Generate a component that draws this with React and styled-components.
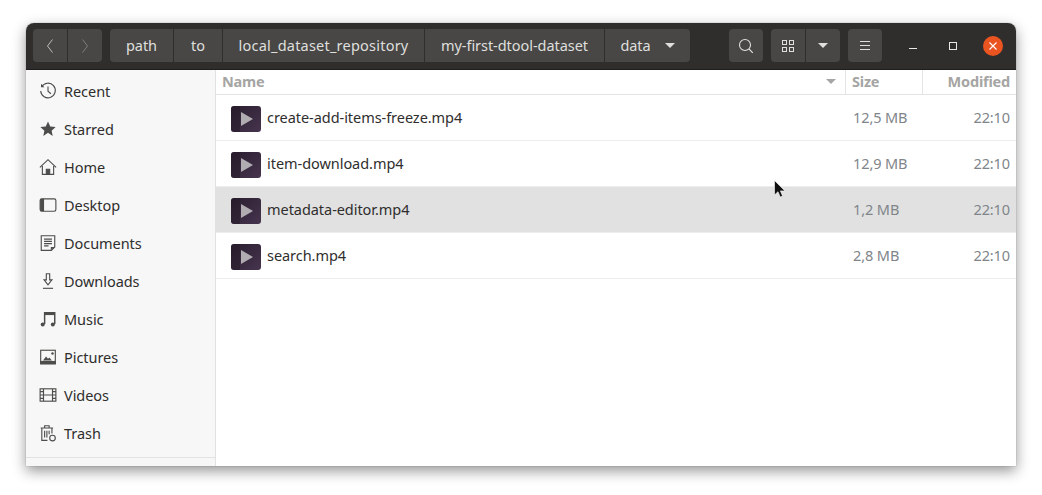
import React from "react";
import styled, { createGlobalStyle } from "styled-components";

const Global = createGlobalStyle`
  html, body { margin: 0; padding: 0; background: #fff; }
  body { font-family: "Noto Sans", "Open Sans", sans-serif; overflow: hidden; }
`;

const Page = styled.div`
  width: 1042px;
  height: 495px;
  padding: 23px 26px 0;
  box-sizing: border-box;
`;
const Win = styled.div`
  position: relative;
  width: 990px;
  height: 443px;
  border-radius: 8px 8px 0 0;
  overflow: hidden;
  display: flex;
  flex-direction: column;
  background: #fff;
`;
const Shadow = styled.div`
  border-radius: 8px 8px 0 0;
  width: 990px;
  height: 443px;
  box-shadow: 0 5px 14px rgba(0, 0, 0, 0.42), 0 0 1px rgba(0, 0, 0, 0.5);
`;
const Header = styled.header`
  flex: none;
  height: 47px;
  background: #2f2e2d;
  border-bottom: 1px solid #1f1e1d;
  box-sizing: border-box;
  display: flex;
  align-items: center;
  padding: 0 0 1px 7px;
`;
const Group = styled.div`
  flex: none;
  display: flex;
  height: 33px;
  margin-right: ${(p) => p.$mr || 0}px;
  border-radius: 4px;
  background: #484745;
  overflow: hidden;
`;
const Btn = styled.div`
  flex: none;
  width: ${(p) => p.$w}px;
  display: flex;
  align-items: center;
  justify-content: center;
  gap: ${(p) => p.$gap || 0}px;
  color: #dfdfdd;
  font-size: 14.5px;
  letter-spacing: ${(p) => p.$ls || -0.05}px;
  & + & { border-left: 1px solid #2f2e2d; }
`;
const Label = styled.span`
  padding-bottom: 2px;
`;
const WinCtl = styled.div`
  flex: none;
  width: 40px;
  display: flex;
  justify-content: center;
  align-items: center;
`;
const CloseDot = styled.div`
  width: 20px;
  height: 20px;
  border-radius: 50%;
  background: #e95420;
  display: flex;
  align-items: center;
  justify-content: center;
`;
const Body = styled.div`
  flex: 1;
  display: flex;
  min-height: 0;
`;
const Side = styled.nav`
  width: 190px;
  flex: none;
  background: #f7f7f7;
  border-right: 1px solid #e2e2e1;
  box-sizing: border-box;
  padding-top: 2px;
  position: relative;
`;
const SideRow = styled.div`
  height: 38px;
  display: flex;
  align-items: center;
  padding-left: 13px;
  gap: 7px;
  color: #2f2e2d;
  font-size: 14.5px;
  letter-spacing: -0.05px;
`;
const SideFoot = styled.div`
  position: absolute;
  left: 0;
  right: 0;
  top: 387px;
  border-top: 1px solid #e2e2e1;
`;
const Main = styled.main`
  flex: 1;
  display: flex;
  flex-direction: column;
`;
const ColHead = styled.div`
  height: 25px;
  flex: none;
  display: flex;
  border-bottom: 1px solid #e4e4e3;
  box-sizing: border-box;
  color: #a5a5a3;
  font-size: 14.5px;
  font-weight: 700;
  letter-spacing: -0.2px;
`;
const HeadCell = styled.div`
  width: ${(p) => p.$w}px;
  flex: ${(p) => (p.$w ? "none" : 1)};
  display: flex;
  align-items: center;
  justify-content: ${(p) => p.$just || "space-between"};
  padding: 0 ${(p) => p.$pr || 6}px 2px 6px;
  box-sizing: border-box;
  & + & { border-left: 1px solid #e4e4e3; }
`;
const Row = styled.div`
  height: 46px;
  flex: none;
  display: flex;
  align-items: center;
  box-sizing: border-box;
  border-bottom: 1px solid #ededec;
  background: ${(p) => (p.$sel ? "#e1e1e1" : "#fff")};
  padding-left: 15px;
  color: #2f2e2d;
  font-size: 14.5px;
  letter-spacing: -0.05px;
`;
const FileIcon = styled.svg`
  flex: none;
  margin-top: 3px;
`;
const FileName = styled.div`
  flex: 1;
  margin-left: 6px;
  padding-bottom: 2px;
`;
const Meta = styled.div`
  color: #80858a;
  width: ${(p) => p.$w}px;
  text-align: ${(p) => p.$align};
  padding: 0 ${(p) => p.$pr || 0}px 2px 0;
  letter-spacing: -0.1px;
`;
const Pointer = styled.svg`
  position: absolute;
  left: 748px;
  top: 157px;
`;

const Ico = ({ children, fill = "none", stroke = "#4d4d4b" }) => (
  <svg width="18" height="18" viewBox="0 0 16 16" fill={fill} stroke={stroke} strokeWidth="1">
    {children}
  </svg>
);

const sideIcons = {
  Recent: (
    <Ico>
      <path d="M2.4 4.2A6.5 6.5 0 1 1 1.5 8" />
      <path d="M1.8 1.6v3h3" fill="#4d4d4b" stroke="none" />
      <path d="M8 4v4.2l2.6 2.2" />
    </Ico>
  ),
  Starred: (
    <Ico fill="#4d4d4b" stroke="none">
      <path d="M8 1.4l2 4.4 4.8.5-3.6 3.2 1 4.7L8 11.4l-4.2 2.8 1-4.7L1.200 6.300l4.800-.5z" />
    </Ico>
  ),
  Home: (
    <Ico>
      <path d="M.8 8.300L8 1.500l7.200 6.800" />
      <path d="M3 7v7.500h10V7" />
      <path d="M6.500 14.500V10h3v4.500z" fill="#4d4d4b" />
    </Ico>
  ),
  Desktop: (
    <Ico>
      <rect x="1" y="2.500" width="14" height="11" rx="1.500" />
      <path d="M1 4a1.500 1.500 0 0 1 1.500-1.500H4.500v11H2.500A1.500 1.500 0 0 1 1 12z" fill="#4d4d4b" stroke="none" />
    </Ico>
  ),
  Documents: (
    <Ico>
      <path d="M2 1.500h12v10l-3 3H2z" />
      <path d="M4.500 4.500h7M4.500 6.500h7M4.500 8.500h7M4.500 10.500h4" />
      <path d="M10.500 14.500v-3h3.500z" fill="#4d4d4b" stroke="none" />
    </Ico>
  ),
  Downloads: (
    <Ico>
      <path d="M6.500 1.500h3V7h2L8 11.500 4.500 7h2z" />
      <path d="M3.500 14.500h9" />
    </Ico>
  ),
  Music: (
    <Ico>
      <path d="M5 12.500V2.500h9v10" strokeWidth="1.300" />
      <path d="M5 2.500h9v2H5z" fill="#4d4d4b" stroke="none" />
      <circle cx="3.300" cy="12.800" r="1.800" fill="#4d4d4b" stroke="none" />
      <circle cx="12.300" cy="12.800" r="1.800" fill="#4d4d4b" stroke="none" />
    </Ico>
  ),
  Pictures: (
    <Ico>
      <rect x="1.500" y="2" width="13" height="12" />
      <path d="M1 11.500h14V14.500H1z" fill="#4d4d4b" stroke="none" />
      <path d="M3.500 11l2.800-3.500 1.700 2 1.200-1L11.500 11z" fill="#4d4d4b" stroke="none" />
      <circle cx="12" cy="4.800" r="1.100" fill="#4d4d4b" stroke="none" />
    </Ico>
  ),
  Videos: (
    <Ico>
      <rect x="1" y="2.500" width="14" height="11" />
      <path d="M4 2.500v11M12 2.500v11M4 8h8M1 5h3M1 8h3M1 11h3M12 5h3M12 8h3M12 11h3" />
    </Ico>
  ),
  Trash: (
    <Ico>
      <path d="M1.500 3.500h11M5 3.500V1.500h4v2" />
      <path d="M2.500 3.500v11h5M11.500 3.500v5" />
      <path d="M5 6v6M7 6v6M9 6v3" />
      <circle cx="12" cy="12.500" r="2.500" />
    </Ico>
  ),
};

const Caret = ({ color = "#dfdfdd" }) => (
  <svg width="10" height="5" viewBox="0 0 10 5">
    <path d="M0 0h10L5 5z" fill={color} />
  </svg>
);

const VideoIcon = () => (
  <FileIcon width="30" height="26" viewBox="0 0 30 26">
    <defs>
      <linearGradient id="vid" x1="0" y1="0" x2="1" y2="1">
        <stop offset="0" stopColor="#2b1f30" />
        <stop offset="1" stopColor="#46344e" />
      </linearGradient>
    </defs>
    <rect x="0" y="0" width="30" height="26" rx="3" fill="url(#vid)" />
    <path d="M0 3a3 3 0 0 1 3-3h6v26H3a3 3 0 0 1-3-3z" fill="#231a28" opacity="0.5" />
    <path d="M10 6l12 7-12 7z" fill="#b0acb2" />
  </FileIcon>
);

const places = ["Recent", "Starred", "Home", "Desktop", "Documents", "Downloads", "Music", "Pictures", "Videos", "Trash"];
const crumbs = [
  ["path", 63],
  ["to", 48],
  ["local_dataset_repository", 201, 0.22],
  ["my-first-dtool-dataset", 179],
];
const files = [
  ["create-add-items-freeze.mp4", "12,5 MB"],
  ["item-download.mp4", "12,9 MB"],
  ["metadata-editor.mp4", "1,2 MB"],
  ["search.mp4", "2,8 MB"],
];

export default function App() {
  return (
    <Page>
      <Global />
      <Shadow>
        <Win>
          <Header>
            <Group $mr={8}>
              <Btn $w={34}>
                <svg width="8" height="14" viewBox="0 0 8 14" fill="none" stroke="#bdbdbb">
                  <path d="M6.500 .500L1.500 7l5 6.500" />
                </svg>
              </Btn>
              <Btn $w={34}>
                <svg width="8" height="14" viewBox="0 0 8 14" fill="none" stroke="#7f7e7c">
                  <path d="M1.500 .500L6.500 7l-5 6.500" />
                </svg>
              </Btn>
            </Group>
            <Group $mr={39}>
              {crumbs.map(([name, w, ls]) => (
                <Btn key={name} $w={w} $ls={ls}>
                  <Label>{name}</Label>
                </Btn>
              ))}
              <Btn $w={85} $gap={14}>
                <Label>data</Label>
                <Caret />
              </Btn>
            </Group>
            <Group $mr={8}>
              <Btn $w={34}>
                <svg width="16" height="16" viewBox="0 0 16 16" fill="none" stroke="#dfdfdd" strokeWidth="1.100">
                  <circle cx="7" cy="7" r="5.500" />
                  <path d="M11 11l3.800 3.800" />
                </svg>
              </Btn>
            </Group>
            <Group $mr={8}>
              <Btn $w={34}>
                <svg width="14" height="14" viewBox="0 0 14 14" fill="none" stroke="#dfdfdd">
                  <rect x="1.500" y="1.500" width="4" height="4" />
                  <rect x="8.500" y="1.500" width="4" height="4" />
                  <rect x="1.500" y="8.500" width="4" height="4" />
                  <rect x="8.500" y="8.500" width="4" height="4" />
                </svg>
              </Btn>
              <Btn $w={34}>
                <Caret />
              </Btn>
            </Group>
            <Group $mr={11}>
              <Btn $w={34}>
                <svg width="12" height="10" viewBox="0 0 12 10" stroke="#dfdfdd">
                  <path d="M1 .500h10M1 4.500h10M1 8.500h10" />
                </svg>
              </Btn>
            </Group>
            <WinCtl>
              <svg width="10" height="10" viewBox="0 0 10 10">
                <path d="M1 7.500h8" stroke="#e8e8e6" strokeWidth="1.200" />
              </svg>
            </WinCtl>
            <WinCtl>
              <svg width="10" height="10" viewBox="0 0 10 10" fill="none">
                <rect x="1.500" y="1.500" width="7" height="7" stroke="#e8e8e6" />
              </svg>
            </WinCtl>
            <WinCtl>
              <CloseDot>
                <svg width="10" height="10" viewBox="0 0 10 10">
                  <path d="M1.500 1.500l7 7M8.500 1.500l-7 7" stroke="#fff" strokeWidth="1.100" />
                </svg>
              </CloseDot>
            </WinCtl>
          </Header>
          <Body>
            <Side>
              {places.map((p) => (
                <SideRow key={p}>
                  {sideIcons[p]}
                  {p}
                </SideRow>
              ))}
              <SideFoot />
            </Side>
            <Main>
              <ColHead>
                <HeadCell $pr={9}>
                  Name
                  <Caret color="#a5a5a3" />
                </HeadCell>
                <HeadCell $w={77}>Size</HeadCell>
                <HeadCell $w={94} $just="flex-end">Modified</HeadCell>
              </ColHead>
              {files.map(([name, size], i) => (
                <Row key={name} $sel={i === 2}>
                  <VideoIcon />
                  <FileName>{name}</FileName>
                  <Meta $w={100} $align="left">{size}</Meta>
                  <Meta $w={57} $align="right" $pr={6}>22:10</Meta>
                </Row>
              ))}
            </Main>
          </Body>
          <Pointer width="12" height="19" viewBox="0 0 12 19">
            <path d="M.500 .500v14.500l3.500-3.300 2.200 5.300 2.400-1-2.200-5.100h4.600z" fill="#111" stroke="#fff" strokeWidth=".6" />
          </Pointer>
        </Win>
      </Shadow>
    </Page>
  );
}
